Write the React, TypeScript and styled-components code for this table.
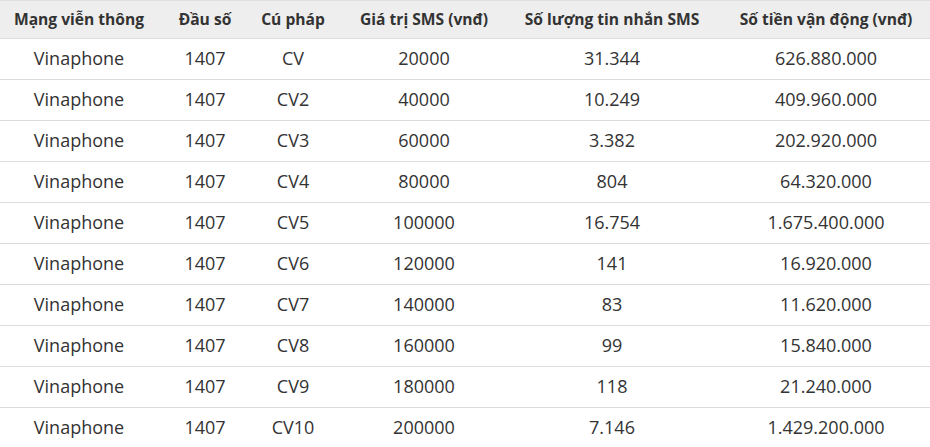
import React from "react";
import styled, { createGlobalStyle } from "styled-components";

const Global = createGlobalStyle`
  html, body { margin: 0; padding: 0; background: #fff; }
  body { font-family: "Open Sans", "Noto Sans", sans-serif; color: #333; }
`;

const Table = styled.table`
  width: 930px;
  border-collapse: collapse;
  table-layout: fixed;
  border-top: 1px solid #dedede;
`;

const HeadRow = styled.tr`
  background: #eeeeee;
`;

const Th = styled.th<{ $pl?: number }>`
  height: 38px;
  box-sizing: border-box;
  padding: 0 0 1px ${(p) => p.$pl ?? 0}px;
  font-size: 15.6px;
  font-weight: 700;
  color: #333;
  text-align: center;
  white-space: nowrap;
  border-bottom: 1px solid #dcdcdc;
`;

const Td = styled.td<{ $pl?: number }>`
  height: 41px;
  box-sizing: border-box;
  padding: 0 0 2px ${(p) => p.$pl ?? 0}px;
  font-size: 18px;
  color: #333;
  text-align: center;
  white-space: nowrap;
  border-bottom: 1px solid #dcdcdc;
`;

const widths = [158, 94, 82, 180, 196, 220];
const headers = [
  "Mạng viễn thông",
  "Đầu số",
  "Cú pháp",
  "Giá trị SMS (vnđ)",
  "Số lượng tin nhắn SMS",
  "Số tiền vận động (vnđ)",
];

const rows: string[][] = [
  ["CV", "20000", "31.344", "626.880.000"],
  ["CV2", "40000", "10.249", "409.960.000"],
  ["CV3", "60000", "3.382", "202.920.000"],
  ["CV4", "80000", "804", "64.320.000"],
  ["CV5", "100000", "16.754", "1.675.400.000"],
  ["CV6", "120000", "141", "16.920.000"],
  ["CV7", "140000", "83", "11.620.000"],
  ["CV8", "160000", "99", "15.840.000"],
  ["CV9", "180000", "118", "21.240.000"],
  ["CV10", "200000", "7.146", "1.429.200.000"],
];

export default function App() {
  return (
    <>
      <Global />
      <Table>
        <colgroup>
          {widths.map((w, i) => (
            <col key={i} style={{ width: w }} />
          ))}
        </colgroup>
        <thead>
          <HeadRow>
            {headers.map((h, i) => (
              <Th key={h} $pl={i === 5 ? 12 : 0}>
                {h}
              </Th>
            ))}
          </HeadRow>
        </thead>
        <tbody>
          {rows.map((r) => (
            <tr key={r[0]}>
              <Td>Vinaphone</Td>
              <Td>1407</Td>
              <Td>{r[0]}</Td>
              <Td>{r[1]}</Td>
              <Td>{r[2]}</Td>
              <Td $pl={12}>{r[3]}</Td>
            </tr>
          ))}
        </tbody>
      </Table>
    </>
  );
}
